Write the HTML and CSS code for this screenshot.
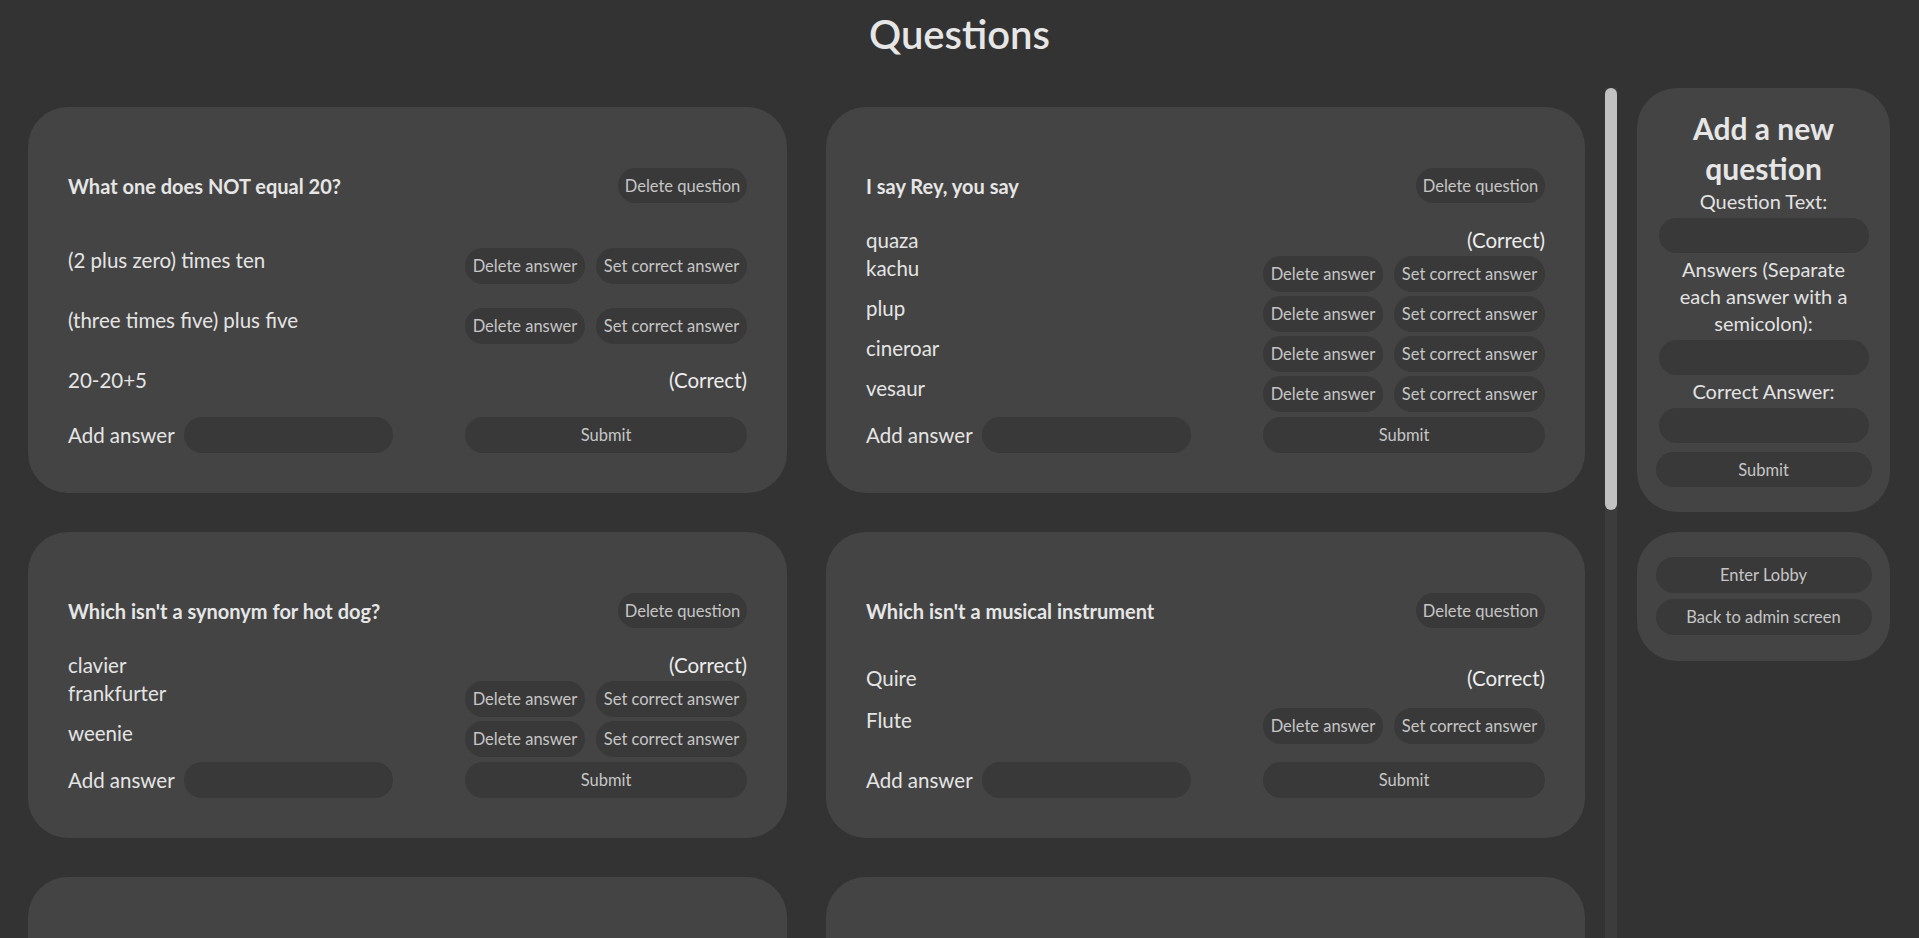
FILE: index.html
```html
<!DOCTYPE html>
<html lang="en">
<head>
<meta charset="utf-8">
<title>Questions</title>
<link rel="stylesheet" href="styles.css">
</head>
<body>
<h1 class="page-title">Questions</h1>
<main class="layout">
  <div class="qpane">
    <section class="qlist">
      <div class="card">
        <div class="q-head"><span class="q-title">What one does NOT equal 20?</span><button class="btn btn-delq">Delete question</button></div>
        <div class="answers">
          <div class="answer"><span>(2 plus zero) times ten</span><div class="answer-btns"><button class="btn btn-dela">Delete answer</button><button class="btn btn-set">Set correct answer</button></div></div>
          <div class="answer"><span>(three times five) plus five</span><div class="answer-btns"><button class="btn btn-dela">Delete answer</button><button class="btn btn-set">Set correct answer</button></div></div>
          <div class="answer"><span>20-20+5</span><span class="correct">(Correct)</span></div>
        </div>
        <div class="add-row"><div class="add-left"><span>Add answer</span><input class="field" type="text"></div><button class="btn btn-submit">Submit</button></div>
      </div>
      <div class="card">
        <div class="q-head"><span class="q-title">I say Rey, you say</span><button class="btn btn-delq">Delete question</button></div>
        <div class="answers">
          <div class="answer"><span>quaza</span><span class="correct">(Correct)</span></div>
          <div class="answer"><span>kachu</span><div class="answer-btns"><button class="btn btn-dela">Delete answer</button><button class="btn btn-set">Set correct answer</button></div></div>
          <div class="answer"><span>plup</span><div class="answer-btns"><button class="btn btn-dela">Delete answer</button><button class="btn btn-set">Set correct answer</button></div></div>
          <div class="answer"><span>cineroar</span><div class="answer-btns"><button class="btn btn-dela">Delete answer</button><button class="btn btn-set">Set correct answer</button></div></div>
          <div class="answer"><span>vesaur</span><div class="answer-btns"><button class="btn btn-dela">Delete answer</button><button class="btn btn-set">Set correct answer</button></div></div>
        </div>
        <div class="add-row"><div class="add-left"><span>Add answer</span><input class="field" type="text"></div><button class="btn btn-submit">Submit</button></div>
      </div>
      <div class="card">
        <div class="q-head"><span class="q-title">Which isn't a synonym for hot dog?</span><button class="btn btn-delq">Delete question</button></div>
        <div class="answers">
          <div class="answer"><span>clavier</span><span class="correct">(Correct)</span></div>
          <div class="answer"><span>frankfurter</span><div class="answer-btns"><button class="btn btn-dela">Delete answer</button><button class="btn btn-set">Set correct answer</button></div></div>
          <div class="answer"><span>weenie</span><div class="answer-btns"><button class="btn btn-dela">Delete answer</button><button class="btn btn-set">Set correct answer</button></div></div>
        </div>
        <div class="add-row"><div class="add-left"><span>Add answer</span><input class="field" type="text"></div><button class="btn btn-submit">Submit</button></div>
      </div>
      <div class="card">
        <div class="q-head"><span class="q-title">Which isn't a musical instrument</span><button class="btn btn-delq">Delete question</button></div>
        <div class="answers">
          <div class="answer"><span>Quire</span><span class="correct">(Correct)</span></div>
          <div class="answer"><span>Flute</span><div class="answer-btns"><button class="btn btn-dela">Delete answer</button><button class="btn btn-set">Set correct answer</button></div></div>
        </div>
        <div class="add-row"><div class="add-left"><span>Add answer</span><input class="field" type="text"></div><button class="btn btn-submit">Submit</button></div>
      </div>
      <div class="card">
        <div class="q-head"><span class="q-title">Which planet is closest to the sun?</span><button class="btn btn-delq">Delete question</button></div>
        <div class="answers">
          <div class="answer"><span>Mercury</span><span class="correct">(Correct)</span></div>
          <div class="answer"><span>Venus</span><div class="answer-btns"><button class="btn btn-dela">Delete answer</button><button class="btn btn-set">Set correct answer</button></div></div>
        </div>
        <div class="add-row"><div class="add-left"><span>Add answer</span><input class="field" type="text"></div><button class="btn btn-submit">Submit</button></div>
      </div>
      <div class="card">
        <div class="q-head"><span class="q-title">Which one is not a primary colour?</span><button class="btn btn-delq">Delete question</button></div>
        <div class="answers">
          <div class="answer"><span>Green</span><span class="correct">(Correct)</span></div>
          <div class="answer"><span>Red</span><div class="answer-btns"><button class="btn btn-dela">Delete answer</button><button class="btn btn-set">Set correct answer</button></div></div>
        </div>
        <div class="add-row"><div class="add-left"><span>Add answer</span><input class="field" type="text"></div><button class="btn btn-submit">Submit</button></div>
      </div>
    </section>
    <div class="scroll-track"><div class="scroll-thumb"></div></div>
  </div>
  <aside class="sidebar">
    <div class="side-card side-form">
      <h2 class="side-title">Add a new question</h2>
      <div class="side-label">Question Text:</div>
      <input class="field side-field" type="text">
      <div class="side-label side-label-narrow">Answers (Separate each answer with a semicolon):</div>
      <input class="field side-field" type="text">
      <div class="side-label">Correct Answer:</div>
      <input class="field side-field" type="text">
      <button class="btn side-btn side-submit">Submit</button>
    </div>
    <div class="side-card side-nav">
      <button class="btn side-btn">Enter Lobby</button>
      <button class="btn side-btn">Back to admin screen</button>
    </div>
  </aside>
</main>
</body>
</html>
```
FILE: styles.css
```css
* { box-sizing: border-box; }
html, body { height: 100%; }
body {
  margin: 0;
  background: #333333;
  color: #e2e2e2;
  font-family: "Lato", "Noto Sans", sans-serif;
  overflow: hidden;
}
.page-title {
  margin: 7px 0 27px;
  height: 54px;
  line-height: 54px;
  font-size: 40px;
  font-weight: 600;
  text-align: center;
  color: #e6e6e6;
}
.layout {
  display: flex;
  align-items: flex-start;
  padding-left: 8px;
  height: calc(100vh - 88px);
}
.qpane {
  display: flex;
  width: 1609px;
  height: 100%;
}
.qlist {
  width: 1597px;
  height: 100%;
  overflow: hidden;
  padding: 19px 20px 20px;
  display: grid;
  grid-template-columns: 759px 759px;
  gap: 39px;
  align-content: start;
}
.scroll-track {
  width: 12px;
  height: 100%;
  background: #3c3c3c;
}
.scroll-thumb {
  height: 422px;
  background: #c1c1c1;
  border-radius: 6px;
}
.card {
  background: #444444;
  border-radius: 40px;
  padding: 61px 40px 40px;
  display: flex;
  flex-direction: column;
}
.q-head {
  display: flex;
  justify-content: space-between;
  align-items: center;
  height: 35px;
}
.q-title {
  font-size: 20px;
  font-weight: 700;
  color: #e6e6e6;
}
.btn {
  border: none;
  background: #393939;
  color: #c6c6c6;
  font-family: inherit;
  font-size: 16.5px;
  border-radius: 18px;
  height: 36px;
  padding: 0 6px;
  white-space: nowrap;
  cursor: pointer;
}
.btn-delq { width: 129px; height: 35px; }
.answers {
  flex: 1;
  display: flex;
  flex-direction: column;
  justify-content: space-evenly;
  gap: 4px;
  margin-top: 25px;
}
.answer {
  display: flex;
  justify-content: space-between;
  align-items: flex-start;
  font-size: 20.5px;
  line-height: 24px;
  color: #e4e4e4;
}
.answer-btns { display: flex; gap: 11px; }
.btn-dela { width: 120px; }
.btn-set { width: 151px; }
.correct { color: #ececec; }
.add-row {
  margin-top: 5px;
  display: flex;
  justify-content: space-between;
  align-items: center;
  font-size: 20.5px;
  color: #e4e4e4;
}
.add-left { display: flex; align-items: center; gap: 9px; }
.field {
  border: none;
  background: #393939;
  border-radius: 18px;
  height: 36px;
  width: 209px;
  color: #e2e2e2;
  font-family: inherit;
  font-size: 16px;
  padding: 0 12px;
}
.btn-submit { width: 282px; }
.sidebar {
  margin-left: 20px;
  width: 253px;
  display: flex;
  flex-direction: column;
  gap: 20px;
}
.side-card {
  background: #444444;
  border-radius: 40px;
  text-align: center;
  display: flex;
  flex-direction: column;
  align-items: center;
}
.side-form { padding: 20px 18px 25px; }
.side-nav { padding: 25px 18px 26px; gap: 6px; }
.side-title {
  margin: 0;
  font-size: 30px;
  line-height: 40px;
  font-weight: 700;
  color: #e6e6e6;
}
.side-label {
  font-size: 20px;
  line-height: 27px;
  color: #e2e2e2;
}
.side-label-narrow { max-width: 200px; }
.side-field { width: 210px; height: 35px; margin: 3px 0; }
.side-btn { width: 216px; }
.side-submit { height: 35px; margin-top: 6px; }
```
